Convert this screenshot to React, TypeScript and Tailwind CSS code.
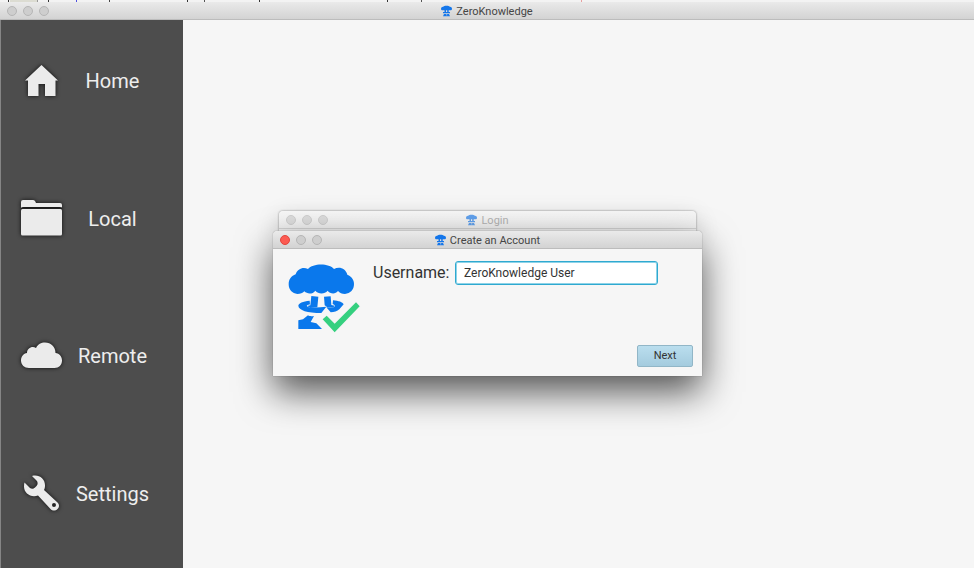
import type { ReactNode } from "react";

function Cloudburst({ className }: { className?: string }) {
  return (
    <svg viewBox="24 24 219 210" className={className} aria-hidden="true">
      <g fill="#0a78ec">
        <path d="M47 58C53 42 68 35 84 42C98 24 148 24 162 42C180 33 197 42 202 59C216 65 222 75 222 87C222 105 211 115 195 117C186 117 179 114 174 108C166 119 150 117 143 107C134 118 115 118 106 107C98 118 82 118 73 109C68 115 61 117 52 117C37 115 26 105 26 88C26 73 34 63 47 58Z" />
        <path d="M94 123L115 125L112 157L91 159L82 153L91 151Z" />
        <path d="M132 125L152 124L154 150L164 152L159 158L142 157L134 151Z" />
        <path d="M89 137C68 139 56 144 55 152C56 166 82 174 124 174L139 155L121 157L93 158C78 156 76 151 90 148Z" />
        <path d="M159 136C176 137 188 142 191 148L178 163C172 169 162 172 152 172L139 157L158 158C166 155 168 151 158 147Z" />
        <path d="M84 181C88 184 95 184 102 183L92 201L109 205L126 222H55V196L69 193Z" />
      </g>
    </svg>
  );
}

function SmallCloudburst() {
  return (
    <svg width="11" height="12" viewBox="0 0 11 12" fill="#1476ea" aria-hidden="true">
      <path d="M0 4C0 2.500 1 1.800 2 1.800C3 0.300 8 0.300 9 1.800C10 1.800 11 2.500 11 4C11 5 10 5.500 9 5.300H2C1 5.500 0 5 0 4Z" />
      <path d="M3.500 5H5V8H3.500ZM6.200 5H7.700V8H6.200Z" />
      <path d="M2 7H9V8.300H2ZM3 9H8L9 11.300H2Z" />
      <path d="M5 9.500H6.200V10.300H5Z" fill="#dcdcdc" />
    </svg>
  );
}

function AccountMark() {
  return (
    <div className="relative h-[70px] w-[73px] shrink-0">
      <Cloudburst className="h-full w-full" />
      <svg viewBox="24 24 219 210" className="absolute inset-0 h-full w-full" aria-hidden="true">
        <path d="M128 193L140 182L164 206L228 142L239 154L164 232Z" fill="#35d07f" stroke="#f5f5f5" strokeWidth="8" paintOrder="stroke" />
      </svg>
    </div>
  );
}

function WindowTitle({ title, closable = false, inactive = false }: { title: string; closable?: boolean; inactive?: boolean }) {
  const dot = "size-2.5 rounded-full border border-[#b6b6b6] bg-[#cecece]";
  return (
    <header
      className={`grid h-[18px] shrink-0 grid-cols-[1fr_auto_1fr] items-center border-b bg-linear-to-b ${
        inactive
          ? "rounded-t border-[#d2d2d2] from-[#f6f6f6] to-[#f0f0f0]"
          : "border-[#bcbcbc] from-[#eaeaea] to-[#d3d3d3]"
      } ${closable ? "rounded-t" : ""}`}
    >
      <div className={`flex gap-1.5 pl-[7px] ${inactive ? "opacity-60" : ""}`}>
        {closable ? (
          <button type="button" aria-label="Close" className="size-2.5 rounded-full border border-[#e2453d] bg-[#fc5b52]" />
        ) : (
          <span className={dot} />
        )}
        <span className={dot} />
        <span className={dot} />
      </div>
      <div className="flex items-center gap-1">
        <span className={inactive ? "opacity-65" : ""}>
          <SmallCloudburst />
        </span>
        <h2 className={`pt-0.5 text-[11px] leading-4 ${inactive ? "text-[#b3b3b3]" : "text-[#454545]"}`}>{title}</h2>
      </div>
    </header>
  );
}

function HomeIcon() {
  return (
    <svg width="41" height="48" viewBox="0 0 41 48">
      <path d="M20.5 8L37 23.500H34.500V39H24V27H17.500V39H7V23.500H4Z" />
    </svg>
  );
}

function FolderIcon() {
  return (
    <svg width="41" height="48" viewBox="0 1 41 48">
      <path d="M0 13V8Q0 6 2 6H12Q13 6 14 7L15 9H39Q41 9 41 11V13.500Q40 13 39 13H2Q1 13 0 14Z" />
      <rect y="15" width="41" height="26.500" rx="1.500" />
      <path d="M0 13.800H41V15H0Z" fill="#202020" />
    </svg>
  );
}

function CloudIcon() {
  return (
    <svg width="41" height="48" viewBox="0 1 41 48">
      <path d="M8 37C3.500 37 0 34 0 29.500C0 25.500 2.500 22.500 6 22C6 17.500 11 14.500 15 17C17 13 20 11.500 24 11.500C30 11.500 34.500 16 34.500 22C38.500 22.500 41 25.500 41 29.500C41 34 38 37 33.500 37Z" />
    </svg>
  );
}

function WrenchIcon() {
  return (
    <svg width="41" height="48" viewBox="0 0 41 48">
      <path
        fillRule="evenodd"
        d="M11 6C18 4 24.500 9 24 16C24 17.500 23.500 19 23 20L36.500 32.500C38.500 34.500 38.500 37 36.500 39C34.500 41 31.500 41 29.500 39L17 25.500C10 28 3 23.500 3 16.500C3 15 3.200 13.500 3.500 12.500L9 18C10.500 19 12.500 19 14 17.500L15.500 16C17 14.500 17 12 15.500 10.500ZM33 33A2 2 0 1 0 33 37A2 2 0 1 0 33 33Z"
      />
    </svg>
  );
}

function NavItem({ label, children }: { label: string; children: ReactNode }) {
  return (
    <button type="button" className="flex h-12 items-center gap-3 pl-5 text-[20px] text-[#eeeeee]">
      <span className="fill-[#ebebeb] drop-shadow-[0_0_2px_rgba(0,0,0,0.8)]" aria-hidden="true">
        {children}
      </span>
      <span className="w-[77px] text-center">{label}</span>
    </button>
  );
}

const backdropMarks = [
  { x: 8, color: "#333333" },
  { x: 37, color: "#999999" },
  { x: 48, color: "#333333" },
  { x: 76, color: "#5050e0" },
  { x: 109, color: "#444444" },
  { x: 187, color: "#333333" },
  { x: 204, color: "#555555" },
  { x: 259, color: "#333333" },
  { x: 387, color: "#333333" },
  { x: 421, color: "#555555" },
  { x: 581, color: "#e8a0a0" },
];

function BackdropStrip() {
  return (
    <svg className="h-0.5 w-full shrink-0 bg-[#f3f3f3]" aria-hidden="true">
      <rect x="10" width="27" height="2" fill="#dcdcd2" />
      {backdropMarks.map((mark) => (
        <rect key={mark.x} x={mark.x} width="1" height="2" fill={mark.color} />
      ))}
    </svg>
  );
}

export default function App() {
  return (
    <div className="relative flex h-screen flex-col overflow-hidden bg-[#f6f6f6] font-['Roboto','Liberation_Sans',sans-serif]">
      <BackdropStrip />
      <WindowTitle title="ZeroKnowledge" />
      <div className="flex min-h-0 grow">
        <nav className="flex w-[183px] flex-col justify-between border-l border-[#858585] bg-[#4d4d4d] pt-[37px] pb-[50px]">
          <NavItem label="Home"><HomeIcon /></NavItem>
          <NavItem label="Local"><FolderIcon /></NavItem>
          <NavItem label="Remote"><CloudIcon /></NavItem>
          <NavItem label="Settings"><WrenchIcon /></NavItem>
        </nav>
        <main className="grow bg-[#f6f6f6]" />
      </div>

      <div className="pointer-events-none absolute inset-0 flex flex-col items-center pt-[211px] pl-px">
        <section className="w-[417px] rounded-t bg-[#eeeeee] pb-0.5 shadow-[0_0_2px_rgba(0,0,0,0.5),0_8px_24px_rgba(0,0,0,0.2)]">
          <WindowTitle title="Login" inactive />
        </section>
        <section
          role="dialog"
          aria-label="Create an Account"
          className="pointer-events-auto relative w-[429px] rounded-t bg-[#f6f6f6] shadow-[0_0_1px_rgba(0,0,0,0.6),0_16px_36px_rgba(0,0,0,0.66)]"
        >
          <WindowTitle title="Create an Account" closable />
          <form className="pt-3 pr-[9px] pb-[9px] pl-[15px]" onSubmit={(event) => event.preventDefault()}>
            <div className="flex gap-3">
              <div className="pt-0.5">
                <AccountMark />
              </div>
              <div className="flex h-6 items-center gap-2">
                <label htmlFor="username" className="w-[74px] text-[16px] whitespace-nowrap text-[#333333]">
                  Username:
                </label>
                <input
                  id="username"
                  type="text"
                  defaultValue="ZeroKnowledge User"
                  className="h-6 w-[203px] rounded-[3px] border border-[#2fa9d0] bg-white px-2 text-[12px] text-[#333333] ring-1 ring-[#8fd3e8] outline-none ring-inset"
                />
              </div>
            </div>
            <div className="flex justify-end pt-3">
              <button
                type="submit"
                className="h-[22px] w-14 rounded-[2px] border border-[#91b6c7] bg-linear-to-b from-[#badeee] to-[#a4cbde] text-[11px] text-[#333333]"
              >
                Next
              </button>
            </div>
          </form>
        </section>
      </div>
    </div>
  );
}
